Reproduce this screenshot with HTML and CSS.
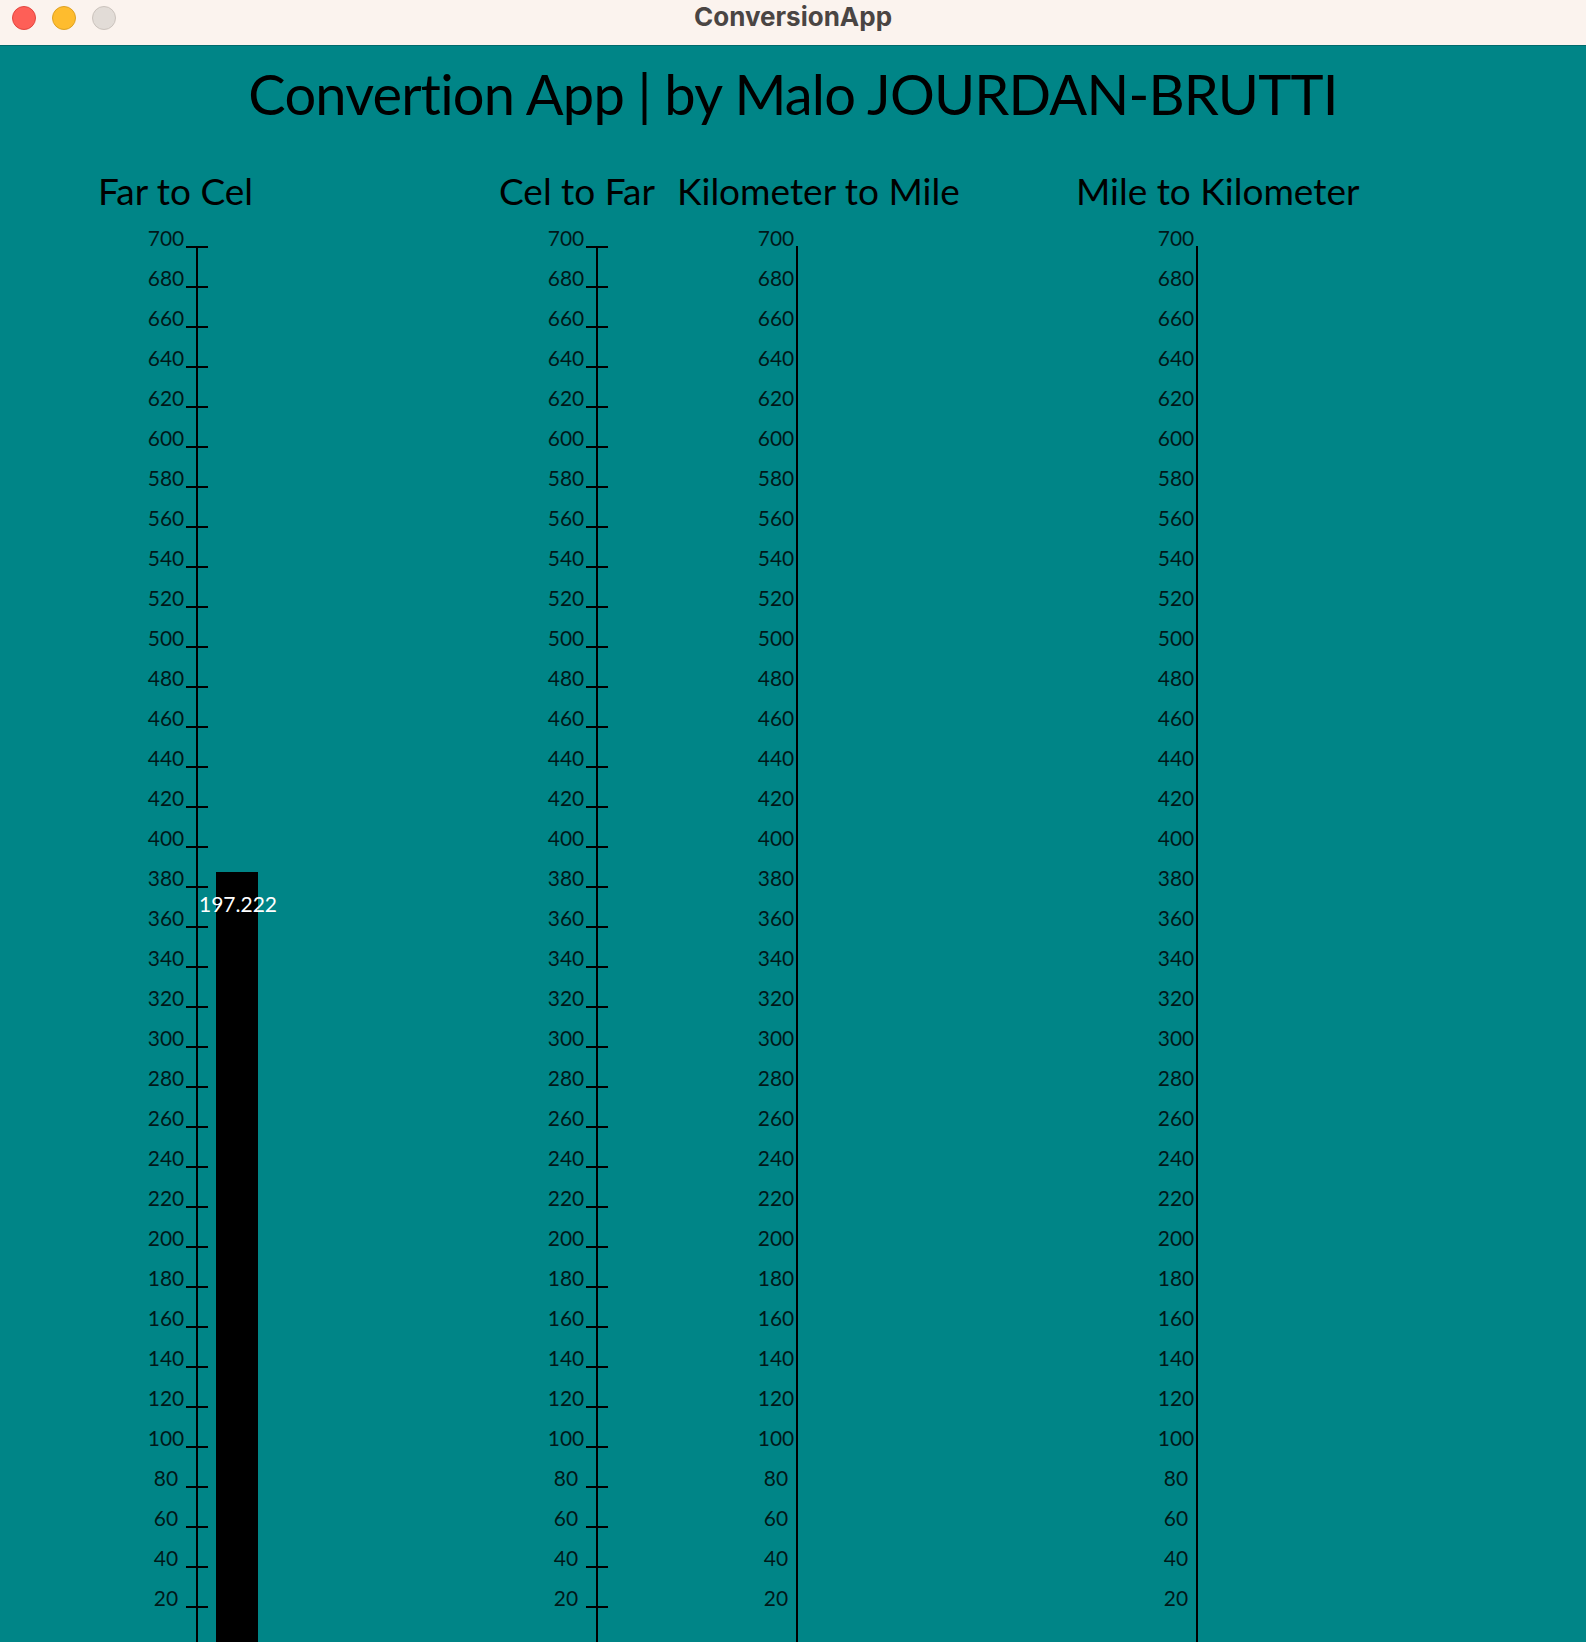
FILE: index.html
```html
<!DOCTYPE html>
<html lang="en">
<head>
<meta charset="utf-8">
<title>ConversionApp</title>
<link rel="stylesheet" href="styles.css">
</head>
<body>
<div class="window">
  <header class="titlebar">
    <div class="lights">
      <span class="light red"></span>
      <span class="light yellow"></span>
      <span class="light gray"></span>
    </div>
    <div class="wintitle">ConversionApp</div>
    <div></div>
  </header>
  <main class="app">
    <h1 class="title">Convertion App | by Malo JOURDAN-BRUTTI</h1>
    <div class="columns">
      <section class="col col-1">
        <h2 class="head">Far to Cel</h2>
        <div class="scale">
          <div class="labels">
            <div>700</div><div>680</div><div>660</div><div>640</div><div>620</div><div>600</div><div>580</div><div>560</div><div>540</div><div>520</div><div>500</div><div>480</div><div>460</div><div>440</div><div>420</div><div>400</div><div>380</div><div>360</div><div>340</div><div>320</div><div>300</div><div>280</div><div>260</div><div>240</div><div>220</div><div>200</div><div>180</div><div>160</div><div>140</div><div>120</div><div>100</div><div>80</div><div>60</div><div>40</div><div>20</div>
          </div>
          <div class="ticks"></div>
          <div class="bar"></div>
          <div class="value">197.222</div>
        </div>
      </section>
      <section class="col col-2">
        <h2 class="head">Cel to Far</h2>
        <div class="scale">
          <div class="labels">
            <div>700</div><div>680</div><div>660</div><div>640</div><div>620</div><div>600</div><div>580</div><div>560</div><div>540</div><div>520</div><div>500</div><div>480</div><div>460</div><div>440</div><div>420</div><div>400</div><div>380</div><div>360</div><div>340</div><div>320</div><div>300</div><div>280</div><div>260</div><div>240</div><div>220</div><div>200</div><div>180</div><div>160</div><div>140</div><div>120</div><div>100</div><div>80</div><div>60</div><div>40</div><div>20</div>
          </div>
          <div class="ticks"></div>
        </div>
      </section>
      <section class="col col-3">
        <h2 class="head">Kilometer to Mile</h2>
        <div class="scale">
          <div class="labels">
            <div>700</div><div>680</div><div>660</div><div>640</div><div>620</div><div>600</div><div>580</div><div>560</div><div>540</div><div>520</div><div>500</div><div>480</div><div>460</div><div>440</div><div>420</div><div>400</div><div>380</div><div>360</div><div>340</div><div>320</div><div>300</div><div>280</div><div>260</div><div>240</div><div>220</div><div>200</div><div>180</div><div>160</div><div>140</div><div>120</div><div>100</div><div>80</div><div>60</div><div>40</div><div>20</div>
          </div>
          <div class="axis"></div>
        </div>
      </section>
      <section class="col col-4">
        <h2 class="head">Mile to Kilometer</h2>
        <div class="scale">
          <div class="labels">
            <div>700</div><div>680</div><div>660</div><div>640</div><div>620</div><div>600</div><div>580</div><div>560</div><div>540</div><div>520</div><div>500</div><div>480</div><div>460</div><div>440</div><div>420</div><div>400</div><div>380</div><div>360</div><div>340</div><div>320</div><div>300</div><div>280</div><div>260</div><div>240</div><div>220</div><div>200</div><div>180</div><div>160</div><div>140</div><div>120</div><div>100</div><div>80</div><div>60</div><div>40</div><div>20</div>
          </div>
          <div class="axis"></div>
        </div>
      </section>
    </div>
  </main>
</div>
</body>
</html>
```

FILE: styles.css
```css
* { box-sizing: border-box; }

html, body {
  margin: 0;
  padding: 0;
  height: 1642px;
  overflow: hidden;
  background: #008587;
}

.window {
  display: flex;
  flex-direction: column;
  height: 1642px;
}

.titlebar {
  height: 46px;
  flex: none;
  background: #fbf3ee;
  border-bottom: 1px solid #006a6c;
  display: grid;
  grid-template-columns: 1fr auto 1fr;
  align-items: start;
}

.lights {
  display: flex;
  gap: 16px;
  margin: 6px 0 0 12px;
}

.light {
  width: 24px;
  height: 24px;
  border-radius: 50%;
  border: 1px solid transparent;
}
.red { background: #fe5f57; border-color: #e2463f; }
.yellow { background: #febc2e; border-color: #dea123; }
.gray { background: #e2dcd7; border-color: #cbc3bd; }

.wintitle {
  font-family: Inter, "Noto Sans", sans-serif;
  font-weight: 700;
  font-size: 26px;
  line-height: 30px;
  padding-top: 2px;
  color: #4a4543;
}

.app {
  flex: 1;
  background: #008587;
  overflow: hidden;
  font-family: Lato, "Noto Sans", sans-serif;
  font-variant-ligatures: none;
  color: #000;
}

.title {
  margin: 13px 0 0;
  font-weight: 400;
  font-size: 56px;
  letter-spacing: -0.8px;
  line-height: 70px;
  text-align: center;
}

.columns {
  display: grid;
  grid-template-columns: 401px 178px 399px 1fr;
  padding-left: 98px;
  margin-top: 39px;
}

.head {
  margin: 0;
  font-weight: 400;
  font-size: 37px;
  line-height: 46px;
  white-space: nowrap;
}

.scale {
  position: relative;
  display: flex;
  align-items: flex-start;
  margin-top: 4px;
}

.col-1 .scale { padding-left: 48px; }
.col-2 .scale { padding-left: 47px; }
.col-3 .scale { padding-left: 79px; }
.col-4 .scale { padding-left: 80px; }

.labels {
  width: 40px;
  flex: none;
  font-size: 21px;
  line-height: 40px;
  text-align: center;
  color: rgba(0, 0, 0, 0.82);
  white-space: nowrap;
}

.ticks {
  width: 22px;
  height: 1420px;
  flex: none;
  margin-top: 28px;
  background:
    linear-gradient(#000, #000) center top / 2px 100% no-repeat,
    repeating-linear-gradient(to bottom, #000 0 2px, transparent 2px 40px);
}

.axis {
  width: 2px;
  height: 1420px;
  flex: none;
  margin-top: 28px;
  background: #000;
}

.bar {
  width: 42px;
  height: 900px;
  flex: none;
  margin: 654px 0 0 8px;
  background: #000;
}

.value {
  position: absolute;
  left: 101px;
  top: 666px;
  font-size: 21px;
  line-height: 40px;
  color: #fff;
  white-space: nowrap;
}
```
